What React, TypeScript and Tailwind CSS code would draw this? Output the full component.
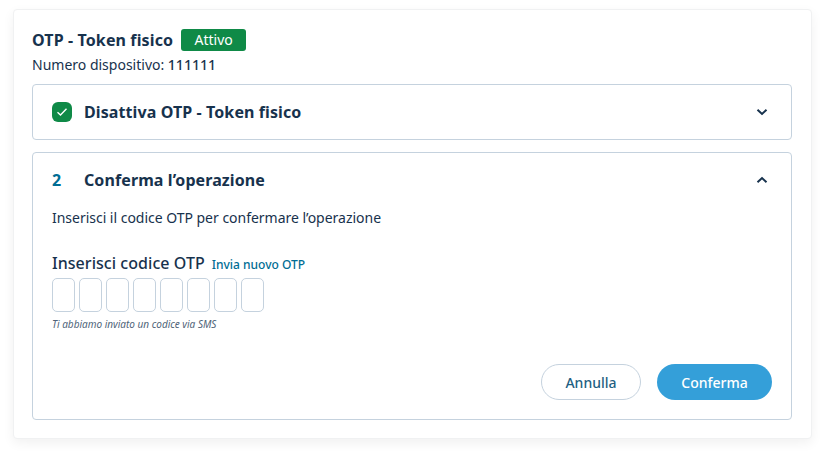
import React from 'react';

const Chevron = ({ up }: { up?: boolean }) => (
  <svg width="12" height="8" viewBox="0 0 12 8" fill="none" stroke="#17324d" strokeWidth={2} className={up ? 'rotate-180' : ''}>
    <path d="M1.5 1.8 6 6 10.5 1.8" />
  </svg>
);

const App: React.FC = () => {
  const cells = [0, 1, 2, 3, 4, 5, 6, 7];

  return (
    <div className="w-[824px] h-[456px] bg-white pt-[9px] pl-[13px] font-['Noto_Sans',sans-serif] text-[#17324d]">
      <div className="w-[799px] h-[430px] rounded-[4px] border border-[#f0f1f2] bg-white pl-[18px] pr-[19px] pt-[17px] shadow-[0_4px_12px_rgba(0,0,0,0.06)]">
        {/* Header */}
        <div className="flex items-center h-[26px]">
          <h1 className="text-[16px] font-bold leading-[26px] tracking-[0.12px]">OTP - Token fisico</h1>
          <span className="ml-2 flex h-[22px] w-[65px] items-center justify-center rounded-[3px] bg-[#0f8a47] text-[14px] leading-none text-white">Attivo</span>
        </div>
        <p className="mt-[1px] text-[14px] leading-[22px]">
          Numero dispositivo: <span className="font-medium">111111</span>
        </p>

        {/* Step 1 */}
        <div className="mt-[8px] flex h-[56px] items-center rounded-[4px] border border-[#c5d2de] pl-[19px] pr-[23px]">
          <span className="flex h-[20px] w-[20px] items-center justify-center rounded-[6px] bg-[#0f8a47]">
            <svg width="12" height="10" viewBox="0 0 12 10" fill="none" stroke="#fff" strokeWidth={1.4}>
              <path d="M1.5 5.2 4.5 8 10.5 1.8" />
            </svg>
          </span>
          <span className="ml-[12px] flex-1 text-[16px] font-bold tracking-[0.1px]">Disattiva OTP - Token fisico</span>
          <Chevron />
        </div>

        {/* Step 2 */}
        <div className="mt-[12px] h-[268px] rounded-[4px] border border-[#c5d2de] px-[19px]">
          <div className="flex h-[54px] items-center pr-[4px]">
            <span className="w-[32px] text-[16px] font-bold text-[#006d94]">2</span>
            <span className="flex-1 text-[16px] font-bold tracking-[0.1px]">Conferma l’operazione</span>
            <Chevron up />
          </div>
          <p className="text-[14px] leading-[22px] tracking-[-0.02px]">Inserisci il codice OTP per confermare l’operazione</p>

          <div className="mt-[22px] flex items-baseline">
            <span className="text-[16px] font-medium leading-[24px] tracking-[0.05px]">Inserisci codice OTP</span>
            <span className="ml-[7px] text-[12px] font-medium text-[#006d94]">Invia nuovo OTP</span>
          </div>
          <div className="mt-[3px] flex gap-[4px]">
            {cells.map((c) => (
              <div key={c} className="h-[34px] w-[23px] rounded-[5px] border border-[#c5d2de]" />
            ))}
          </div>
          <p className="mt-[5px] text-[10px] italic leading-[14px] text-[#4f6478]">Ti abbiamo inviato un codice via SMS</p>

          <div className="mt-[33px] flex justify-end gap-[16px]">
            <button className="h-[36px] w-[100px] rounded-full border border-[#c5d2de] bg-white text-[14px] font-medium text-[#1f5f82]">Annulla</button>
            <button className="h-[36px] w-[115px] rounded-full bg-[#349fd9] text-[14px] font-medium text-white">Conferma</button>
          </div>
        </div>
      </div>
    </div>
  );
};

export default App;
